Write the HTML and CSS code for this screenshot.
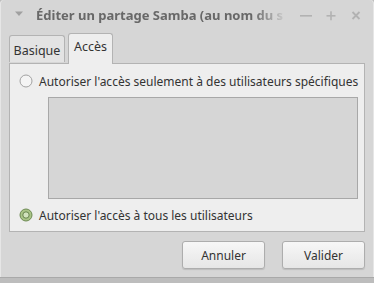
FILE: index.html
```html
<!DOCTYPE html>
<html lang="fr">
<head>
<meta charset="utf-8">
<title>Éditer un partage Samba</title>
<link rel="stylesheet" href="styles.css">
</head>
<body>
<div class="window">
  <div class="titlebar">
    <svg class="menu-tri" width="10" height="8" viewBox="0 0 10 8"><path d="M1 1.5 L9 1.5 L5 6 Z" fill="#a0a0a0"/></svg>
    <div class="title">Éditer un partage Samba (au nom du s</div>
    <div class="controls">
      <svg width="14" height="14" viewBox="0 0 14 14"><rect x="1" y="7" width="12" height="1.6" fill="#b2b2b2"/></svg>
      <svg width="14" height="14" viewBox="0 0 14 14"><rect x="2.5" y="7" width="9" height="1.6" fill="#b2b2b2"/><rect x="6.2" y="3.3" width="1.6" height="9" fill="#b2b2b2"/></svg>
      <svg width="14" height="14" viewBox="0 0 14 14"><path d="M3.5 4 L10.5 11 M10.5 4 L3.5 11" stroke="#b2b2b2" stroke-width="1.8"/></svg>
    </div>
  </div>
  <div class="tabs">
    <div class="tab">Basique</div>
    <div class="tab active">Accès</div>
  </div>
  <div class="panel">
    <div class="radio-row">
      <svg class="radio" width="14" height="14" viewBox="0 0 14 14"><circle cx="7" cy="7" r="6" fill="#f4f4f4" stroke="#a2a2a2"/></svg>
      <span>Autoriser l'accès seulement à des utilisateurs spécifiques</span>
    </div>
    <div class="listbox"></div>
    <div class="radio-row second">
      <svg class="radio" width="14" height="14" viewBox="0 0 14 14"><circle cx="7" cy="7" r="6" fill="#a9c486" stroke="#6d8a52"/><circle cx="7" cy="7" r="3.2" fill="#d2e3bd" stroke="#66844b" stroke-width="1"/></svg>
      <span>Autoriser l'accès à tous les utilisateurs</span>
    </div>
  </div>
  <div class="buttons">
    <button class="btn">Annuler</button>
    <button class="btn">Valider</button>
  </div>
</div>
</body>
</html>
```
FILE: styles.css
```css
* { box-sizing: border-box; }
html, body { margin: 0; padding: 0; }
body {
  width: 374px;
  height: 283px;
  background: #bdbdbd;
  font-family: "Noto Sans", "Open Sans", sans-serif;
  overflow: hidden;
}
.window {
  width: 374px;
  height: 278px;
  background: #d6d6d6;
  border-radius: 4px 4px 0 0;
  border-bottom: 1px solid #a9a9a9;
  box-shadow: inset 1px 0 0 #e6e6e6, inset -1px 0 0 #e6e6e6;
}
.titlebar {
  height: 33px;
  display: flex;
  align-items: center;
  padding: 0 0 4px 14px;
}
.menu-tri { flex: none; margin-right: 12px; margin-top: -2px; }
.title {
  flex: none;
  width: 252px;
  font-size: 13px;
  font-weight: bold;
  color: #686868;
  white-space: nowrap;
  overflow: hidden;
  -webkit-mask-image: linear-gradient(to right, #000 86%, transparent 100%);
  mask-image: linear-gradient(to right, #000 86%, transparent 100%);
}
.controls {
  display: flex;
  gap: 11px;
  margin-left: auto;
  margin-right: 11px;
}
.tabs {
  display: flex;
  align-items: flex-end;
  padding-left: 9px;
  gap: 3px;
  height: 30px;
  position: relative;
  z-index: 1;
}
.tab {
  height: 27px;
  margin-bottom: 1px;
  width: 56px;
  font-size: 12.5px;
  color: #333;
  background: #e3e3e3;
  border: 1px solid #b3b3b3;
  border-bottom: none;
  border-radius: 3px 3px 0 0;
  display: flex;
  align-items: center;
  justify-content: center;
  padding-top: 2px;
}
.tab.active {
  width: 45px;
  height: 31px;
  margin-bottom: -1px;
  background: #eeeeee;
  align-items: flex-start;
  padding-top: 4px;
}
.panel {
  margin: 0 9px 0 9px;
  height: 169px;
  background: #eeeeee;
  border: 1px solid #b3b3b3;
  padding: 9px 0 0 9px;
}
.radio-row {
  display: flex;
  align-items: center;
  gap: 6px;
  height: 16px;
  font-size: 12px;
  color: #333;
  white-space: nowrap;
}
.radio { flex: none; }
.listbox {
  margin: 8px 6px 0 29px;
  height: 102px;
  background: #d6d6d6;
  border: 1px solid #a8a8a8;
}
.radio-row.second { margin-top: 8px; }
.buttons {
  display: flex;
  justify-content: flex-end;
  gap: 17px;
  padding: 9px 9px 0 0;
}
.btn {
  width: 83px;
  height: 28px;
  font-family: "Noto Sans", "Open Sans", sans-serif;
  font-size: 12px;
  color: #333;
  background: linear-gradient(#f7f7f7, #e6e6e6);
  border: 1px solid #adadad;
  border-radius: 3px;
  box-shadow: 0 1px 1px rgba(0,0,0,0.12);
  padding: 0;
}
```
